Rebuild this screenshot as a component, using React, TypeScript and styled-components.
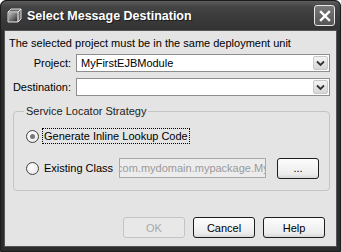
import React from 'react';
import styled, { createGlobalStyle } from 'styled-components';

const GlobalStyle = createGlobalStyle`
  html, body {
    margin: 0;
    padding: 0;
    background: #ffffff;
  }
  * {
    box-sizing: border-box;
  }
`;

const Window = styled.div`
  width: 341px;
  height: 252px;
  display: flex;
  flex-direction: column;
  background: #2c2c2c;
  border: 1px solid #1c1c1c;
  border-radius: 6px 6px 0 0;
  padding: 0 3px 4px 3px;
  font-family: 'Liberation Sans', Arial, sans-serif;
  font-size: 11px;
  color: #000;
  overflow: hidden;
`;

const TitleBar = styled.div`
  height: 29px;
  flex: 0 0 auto;
  display: flex;
  align-items: center;
  gap: 5px;
  margin: 0 -3px;
  padding: 0 5px 0 6px;
  background: linear-gradient(#5c5c5c 0%, #444 20%, #3a3a3a 60%, #333 100%);
  border-radius: 6px 6px 0 0;
`;

const Title = styled.div`
  flex: 1;
  color: #fff;
  font-family: 'Liberation Sans', Arial, sans-serif;
  font-weight: bold;
  font-size: 12.5px;
  text-shadow: 1px 1px 0 #1a1a1a;
  padding-top: 1px;
`;

const CloseButton = styled.div`
  width: 21px;
  height: 21px;
  border: 1px solid #e8e8e8;
  border-radius: 3px;
  background: linear-gradient(#7a7a7a, #555);
  display: flex;
  align-items: center;
  justify-content: center;
`;

const Body = styled.div`
  flex: 1;
  display: flex;
  flex-direction: column;
  background: #e4e4e4;
  border: 1px solid #555;
  padding: 5px 6px 8px 4px;
`;

const Intro = styled.div`
  line-height: 14px;
  margin-bottom: 4px;
  white-space: nowrap;
`;

const FieldRow = styled.div`
  display: grid;
  grid-template-columns: 62px 1fr;
  column-gap: 5px;
  align-items: center;
  margin-bottom: 6px;
`;

const Label = styled.label`
  text-align: right;
`;

const Combo = styled.div`
  height: 18px;
  display: flex;
  align-items: center;
  background: #fff;
  border: 1px solid #8e8e8e;
  padding: 1px;
`;

const ComboText = styled.div`
  flex: 1;
  padding-left: 3px;
`;

const ComboButton = styled.div`
  width: 15px;
  height: 14px;
  border: 1px solid #c8c8c8;
  border-radius: 2px;
  background: linear-gradient(#f4f4f4, #d6d6d6);
  display: flex;
  align-items: center;
  justify-content: center;
`;

const Group = styled.fieldset`
  margin: 2px 0 0 4px;
  padding: 8px 8px 12px 12px;
  border: 1px solid #c4c4c4;
  border-radius: 4px;
  display: flex;
  flex-direction: column;
  gap: 12px;
`;

const Legend = styled.legend`
  padding: 0 2px;
  margin-left: -2px;
  color: #222;
  line-height: 14px;
`;

const RadioRow = styled.div`
  display: flex;
  align-items: center;
  height: 20px;
  white-space: nowrap;
`;

const Radio = styled.span<{ $checked?: boolean }>`
  flex: 0 0 auto;
  width: 13px;
  height: 13px;
  border-radius: 50%;
  border: 1px solid #444;
  background: radial-gradient(circle at 40% 40%, #fff, #e2e2e2);
  display: flex;
  align-items: center;
  justify-content: center;
  margin-right: 3px;
  &::after {
    content: '';
    width: 5px;
    height: 5px;
    border-radius: 50%;
    background: ${p => (p.$checked ? '#777' : 'transparent')};
  }
`;

const RadioLabel = styled.span<{ $focused?: boolean }>`
  padding: 1px 1px;
  border: 1px dotted ${p => (p.$focused ? '#000' : 'transparent')};
`;

const ClassField = styled.div`
  flex: 0 0 auto;
  width: 147px;
  height: 20px;
  margin-left: 4px;
  border: 1px solid #a8a8a8;
  background: #ececec;
  color: #9a9a9a;
  padding-top: 3px;
  overflow: hidden;
  white-space: nowrap;
`;

const ClassText = styled.span`
  display: inline-block;
  margin-left: -3px;
`;

const Button = styled.div<{ $disabled?: boolean }>`
  width: 62px;
  height: 21px;
  display: flex;
  align-items: center;
  justify-content: center;
  border: 1px solid ${p => (p.$disabled ? '#c4c4c4' : '#1e1e1e')};
  border-radius: 3px;
  background: ${p => (p.$disabled ? '#e8e8e8' : 'linear-gradient(#fdfdfd, #ececec 80%, #d8d8d8)')};
  color: ${p => (p.$disabled ? '#a8a8a8' : '#000')};
`;

const SmallButton = styled(Button)`
  flex: 0 0 auto;
  width: 42px;
  margin-left: 11px;
`;

const Footer = styled.div`
  margin-top: auto;
  display: flex;
  justify-content: flex-end;
  gap: 8px;
  padding-right: 5px;
`;

const Chevron = () => (
  <svg width="9" height="7" viewBox="0 0 9 7">
    <path d="M1 1.5 L4.5 5 L8 1.5" fill="none" stroke="#333" strokeWidth="1.8" />
  </svg>
);

const App: React.FC = () => {
  return (
    <>
      <GlobalStyle />
      <Window>
        <TitleBar>
          <svg width="15" height="15" viewBox="0 0 15 15">
            <defs>
              <linearGradient id="g" x1="0" y1="0" x2="1" y2="1">
                <stop offset="0" stopColor="#bbb" />
                <stop offset="1" stopColor="#333" />
              </linearGradient>
            </defs>
            <path d="M1 4 L4 1 L14 1 L14 11 L11 14 L1 14 Z" fill="#6a6a6a" stroke="#ddd" strokeWidth="1" />
            <path d="M1 4 L11 4 L14 1 M11 4 L11 14" fill="none" stroke="#eee" strokeWidth="1" />
            <path d="M2 5 L10 5 L10 13 L2 13 Z" fill="url(#g)" />
          </svg>
          <Title>Select Message Destination</Title>
          <CloseButton>
            <svg width="12" height="12" viewBox="0 0 12 12">
              <path d="M2 2 L10 10 M10 2 L2 10" stroke="#fff" strokeWidth="2.4" strokeLinecap="square" />
            </svg>
          </CloseButton>
        </TitleBar>
        <Body>
          <Intro>The selected project must be in the same deployment unit</Intro>
          <FieldRow>
            <Label>Project:</Label>
            <Combo>
              <ComboText>MyFirstEJBModule</ComboText>
              <ComboButton><Chevron /></ComboButton>
            </Combo>
          </FieldRow>
          <FieldRow>
            <Label>Destination:</Label>
            <Combo>
              <ComboText />
              <ComboButton><Chevron /></ComboButton>
            </Combo>
          </FieldRow>
          <Group>
            <Legend>Service Locator Strategy</Legend>
            <RadioRow>
              <Radio $checked />
              <RadioLabel $focused>Generate Inline Lookup Code</RadioLabel>
            </RadioRow>
            <RadioRow>
              <Radio />
              <RadioLabel>Existing Class</RadioLabel>
              <ClassField>
                <ClassText>com.mydomain.mypackage.MyClass</ClassText>
              </ClassField>
              <SmallButton>...</SmallButton>
            </RadioRow>
          </Group>
          <Footer>
            <Button $disabled>OK</Button>
            <Button>Cancel</Button>
            <Button>Help</Button>
          </Footer>
        </Body>
      </Window>
    </>
  );
};

export default App;
